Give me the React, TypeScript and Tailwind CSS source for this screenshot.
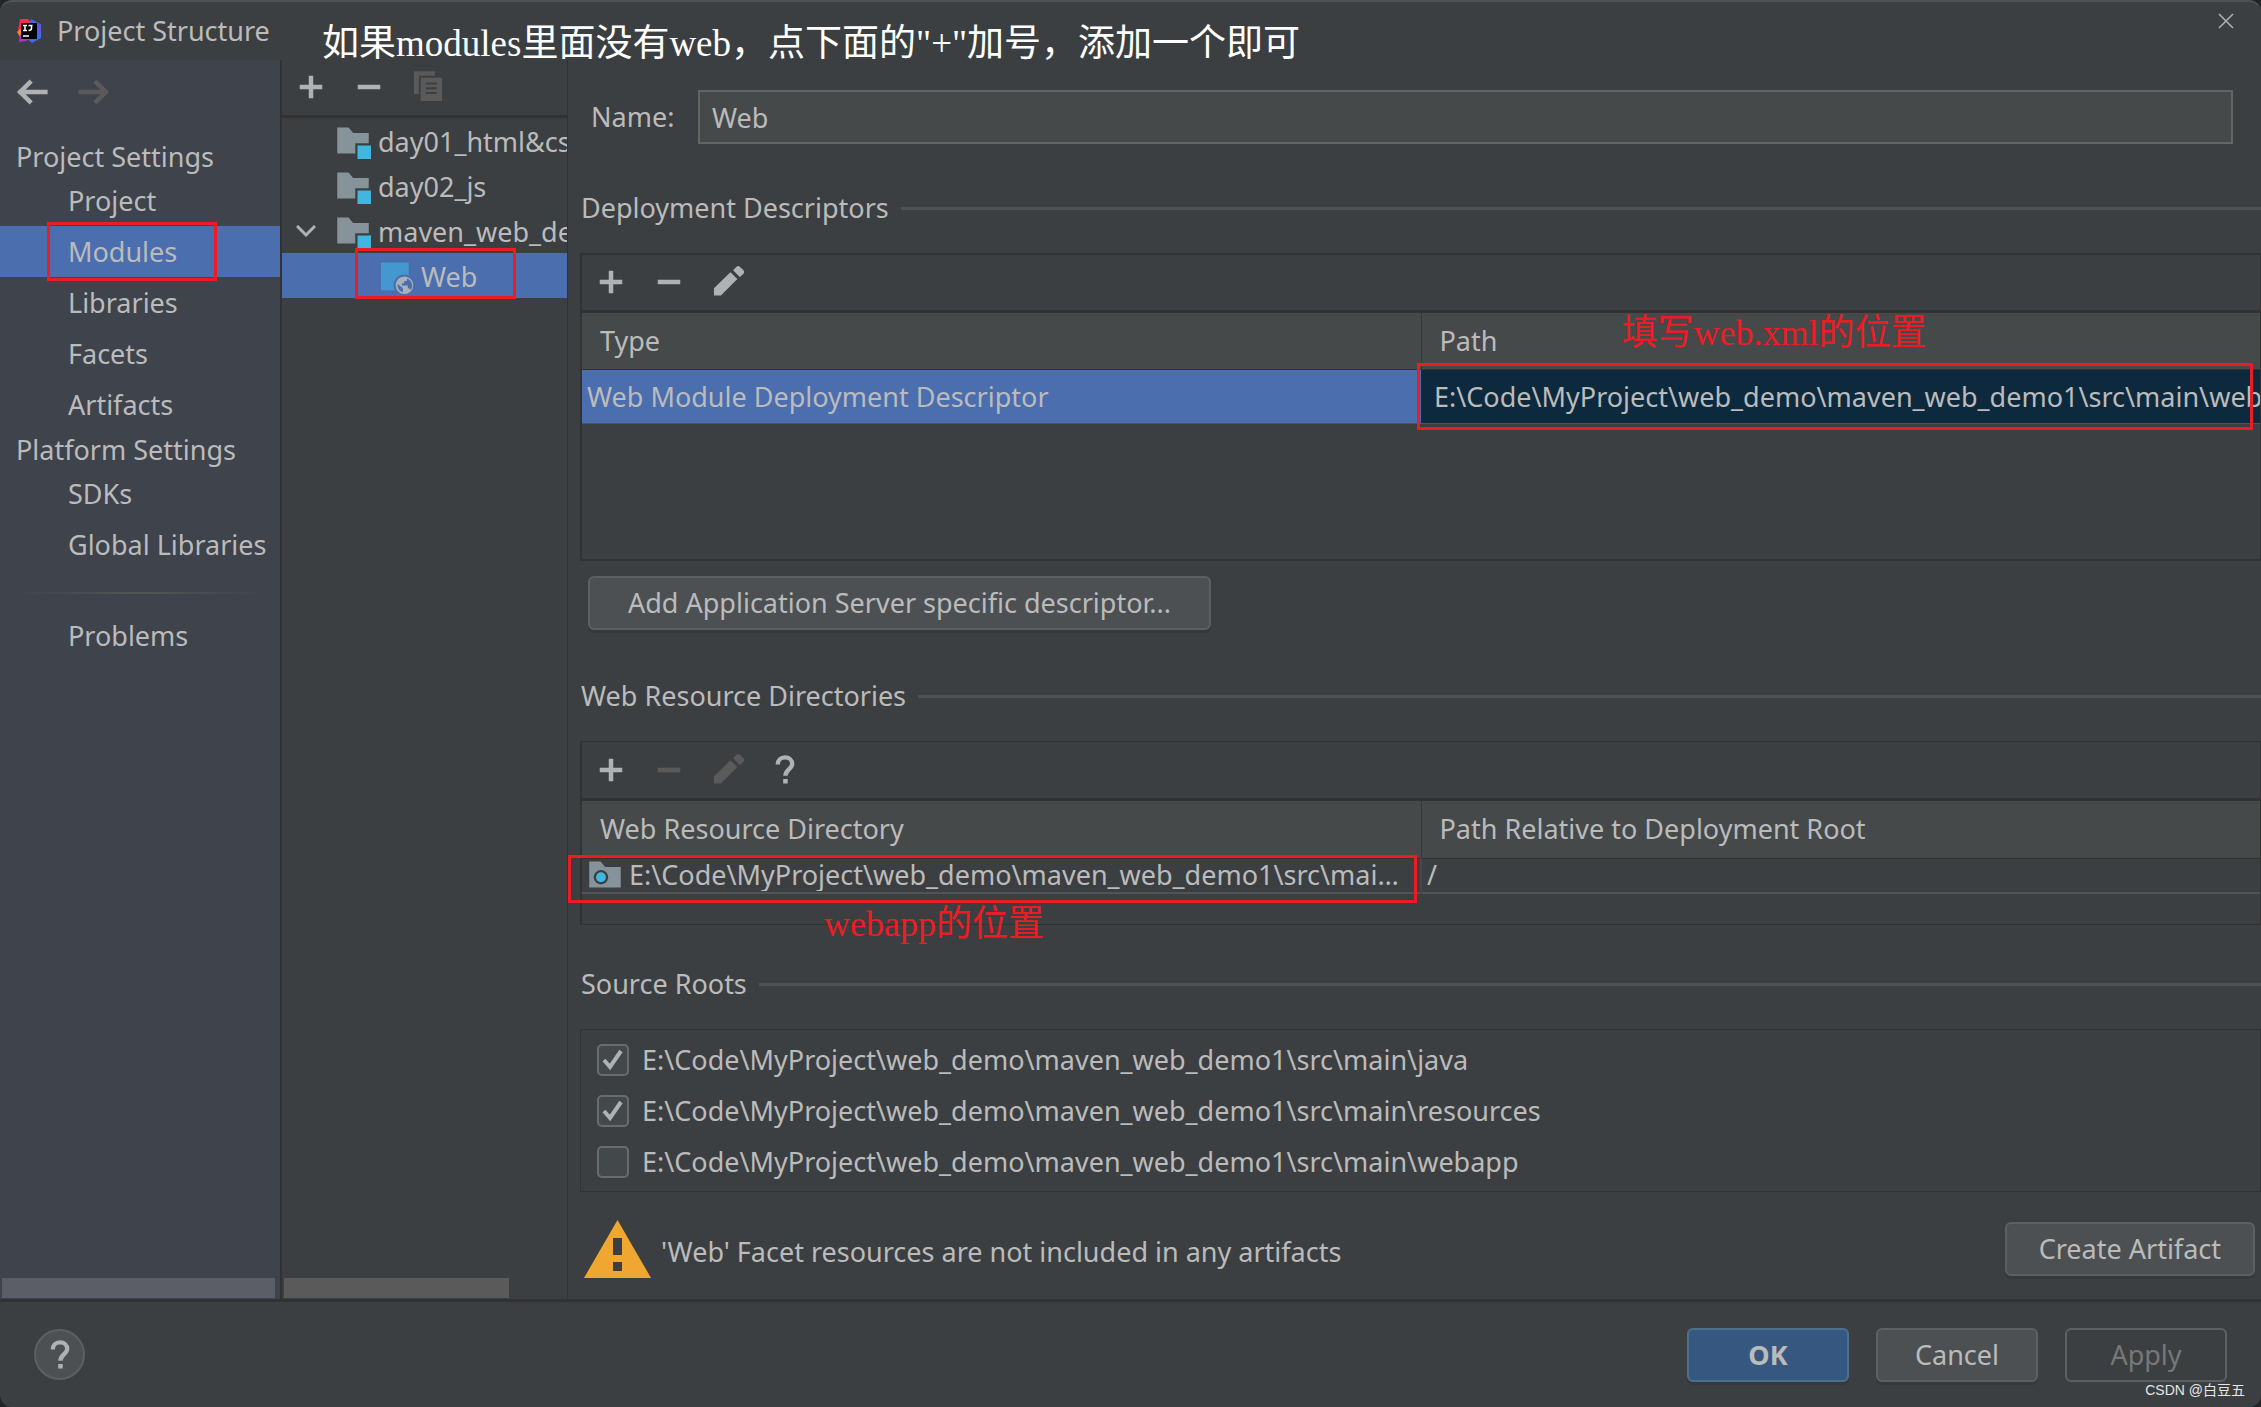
import { useState } from 'react';
import type { ReactNode } from 'react';

const ROOT = 'E:\\Code\\MyProject\\web_demo\\maven_web_demo1\\src\\main';

const PROJECT_ITEMS = ['Project', 'Modules', 'Libraries', 'Facets', 'Artifacts'];
const PLATFORM_ITEMS = ['SDKs', 'Global Libraries'];

const BUTTON =
  'flex items-center justify-center rounded-md border-2 border-[#5e6060] bg-[#4c5052] h-[54px] shadow-[0_3px_0_#36393a]';

/* ---------- icons (16 unit grid) ---------- */

function Icon({ children, className = '' }: { children: ReactNode; className?: string }) {
  return (
    <svg viewBox="0 0 16 16" className={`size-9 shrink-0 ${className}`} fill="currentColor" aria-hidden="true">
      {children}
    </svg>
  );
}

const PlusIcon = () => (
  <Icon>
    <path d="M7 3h2v4h4v2H9v4H7V9H3V7h4z" />
  </Icon>
);

const MinusIcon = () => (
  <Icon>
    <path d="M3 7h10v2H3z" />
  </Icon>
);

const PencilIcon = () => (
  <Icon>
    <path d="M2.2 14v-3.200L9.500 3.700l3.100 3L5.300 14z" />
    <path d="M10.700 2.800l1.400-1.500a1.200 1.200 0 0 1 1.700 0l1.400 1.400a1.200 1.200 0 0 1 0 1.700l-1.500 1.400z" />
  </Icon>
);

const CopyIcon = () => (
  <Icon>
    <path d="M2.200 1h9.300v2H4.400v8.100H2.200z" />
    <path
      fillRule="evenodd"
      d="M5.200 3.900h9.500v10.300H5.200zM7.400 6v.9h5V6zM7.400 8.100V9h5v-.9zM7.400 10.200v.9h5v-.9z"
    />
  </Icon>
);

const HelpIcon = () => (
  <Icon>
    <path
      d="M4.800 5.600C4.800 3.600 6.100 2.400 8 2.400s3.200 1.200 3.200 2.900c0 2.100-3 2.600-3 5.200"
      fill="none"
      stroke="currentColor"
      strokeWidth="1.9"
    />
    <path d="M7.200 12h2v2h-2z" />
  </Icon>
);

const ArrowIcon = ({ flip = false }: { flip?: boolean }) => (
  <Icon className={flip ? 'rotate-180' : ''}>
    <path d="M1.500 8h13M7.200 3.200L2.300 8l4.900 4.800" fill="none" stroke="currentColor" strokeWidth="2" />
  </Icon>
);

const ModuleIcon = () => (
  <Icon className="text-[#87939a]">
    <path d="M1 2h5l2.100 2.400H15V9H9v4.500H1z" />
    <path d="M10 10h6v6h-6z" fill="#40b6e0" />
  </Icon>
);

const WebIcon = () => (
  <Icon>
    <path d="M.9 2h12.300v12.400H.9z" fill="#4497cf" />
    <circle cx="11.300" cy="12.100" r="4.800" fill="#4b6eaf" />
    <circle cx="11.300" cy="12.100" r="3.900" fill="#a9b2b8" />
    <path
      d="M8.300 11.500l2.300 1.900v1.900c-1.600-.5-2.600-2-2.300-3.800zM12.400 9.100c1.500.5 2.300 1.700 2.300 3.100 0 .8-.3 1.500-.7 2-.2-.5-.6-.8-1.200-.8v-1.200h-2.600v-1h1v-1h1.200z"
      fill="#4b6eaf"
    />
  </Icon>
);

const WebFolderIcon = () => (
  <Icon className="text-[#87939a]">
    <path d="M1 2h5l2.100 2.400H15v9.100H1z" />
    <circle cx="6.200" cy="9" r="3.200" fill="#3c3f41" />
    <circle cx="6.200" cy="9" r="2.200" fill="#40b6e0" />
  </Icon>
);

function LogoIcon() {
  return (
    <svg viewBox="0 0 24 24" className="size-6 shrink-0" aria-hidden="true">
      <path d="M3 0h8l5 5-2 9L1 11z" fill="#fe2857" />
      <path d="M0 13l3-3 3 4-3 4z" fill="#fc801d" />
      <path d="M14 0l10 5.500V19l-9 5-6-5z" fill="#3a6cf0" />
      <path d="M24 5.500V13l-4 2V3.500z" fill="#5b57e0" />
      <path d="M3 16l9 4-3 2-7 1z" fill="#b62fd0" />
      <path d="M4 4h16v16H4z" fill="#000" />
      <path d="M6 6.500h4M8 6.500v5M6 11.500h4M11.500 6.500h4M14.500 6.500v3q0 2-3 2M6 17h6" stroke="#fff" strokeWidth="1.5" fill="none" />
    </svg>
  );
}

/* ---------- building blocks ---------- */

/** Red frame drawn over the control that the note is about. */
const Mark = ({ className }: { className: string }) => (
  <span className={`pointer-events-none absolute z-10 border-[3px] border-[#ed1c24] ${className}`} />
);

const Note = ({ children, className }: { children: ReactNode; className: string }) => (
  <p
    className={`pointer-events-none absolute z-20 whitespace-nowrap font-['Liberation_Serif','Noto_Sans_CJK_SC',serif] leading-10 ${className}`}
  >
    {children}
  </p>
);

function ToolButton({ label, disabled, children }: { label: string; disabled?: boolean; children: ReactNode }) {
  return (
    <button
      type="button"
      aria-label={label}
      disabled={disabled}
      className="flex h-[54px] w-[58px] items-center justify-center text-[#afb1b3] disabled:text-[#5a5a5a]"
    >
      {children}
    </button>
  );
}

function SectionTitle({ children }: { children: ReactNode }) {
  return (
    <div className="mb-[25px] flex h-10 items-center gap-3 pl-[13px]">
      <h2>{children}</h2>
      <span className="h-[3px] flex-1 bg-[#515151]" />
    </div>
  );
}

function NavItem({ label, active, onClick }: { label: string; active: boolean; onClick: () => void }) {
  return (
    <li className={`relative ${active ? 'bg-[#4b6eaf]' : ''}`}>
      <button
        type="button"
        onClick={onClick}
        className="flex h-[51px] w-full items-center whitespace-nowrap pl-[68px]"
      >
        {label}
      </button>
      {label === 'Modules' && <Mark className="-top-1 left-[47px] h-[59px] w-[170px]" />}
    </li>
  );
}

function Sidebar() {
  const [active, setActive] = useState('Modules');
  const renderItem = (label: string) => (
    <NavItem key={label} label={label} active={active === label} onClick={() => setActive(label)} />
  );
  return (
    <nav className="flex w-[282px] shrink-0 flex-col border-r-2 border-[#323232] bg-[#3e434c]">
      <div className="flex h-[77px] items-center gap-6 px-[15px] pb-[13px]">
        <button type="button" aria-label="Back" className="text-[#afb1b3]">
          <ArrowIcon />
        </button>
        <button type="button" aria-label="Forward" disabled className="text-[#5a5a5a]">
          <ArrowIcon flip />
        </button>
      </div>
      <h2 className="flex h-[38px] items-center pt-[2px] pl-4">Project Settings</h2>
      <ul>{PROJECT_ITEMS.map(renderItem)}</ul>
      <h2 className="flex h-[38px] items-center pt-[2px] pl-4">Platform Settings</h2>
      <ul>{PLATFORM_ITEMS.map(renderItem)}</ul>
      <hr className="mx-3 mt-[22px] mb-4 h-[2px] border-0 bg-linear-to-r from-transparent via-[#555555] to-transparent" />
      <ul>{renderItem('Problems')}</ul>
      <div className="mt-auto mr-[5px] mb-px ml-[2px] h-5 bg-[#5b5e66]" />
    </nav>
  );
}

function TreeRow({ label, open }: { label: string; open?: boolean }) {
  return (
    <li className="flex h-[45px] items-center whitespace-nowrap">
      <span className="flex w-[53px] shrink-0 justify-center pr-[6px]">
        {open && (
          <svg viewBox="0 0 20 12" className="h-3 w-5" fill="none" stroke="#afb1b3" strokeWidth="3" aria-hidden="true">
            <path d="M1 1l9 9 9-9" />
          </svg>
        )}
      </span>
      <ModuleIcon />
      <span className="pt-[2px] pl-[7px]">{label}</span>
    </li>
  );
}

function ModuleTree() {
  return (
    <section className="flex w-[286px] shrink-0 flex-col border-r border-[#323232]">
      <div className="flex h-[58px] border-b-[3px] border-[#323232]">
        <ToolButton label="Add">
          <PlusIcon />
        </ToolButton>
        <ToolButton label="Remove">
          <MinusIcon />
        </ToolButton>
        <ToolButton label="Copy" disabled>
          <CopyIcon />
        </ToolButton>
      </div>
      <div className="relative">
        <ul className="overflow-hidden">
          <TreeRow label="day01_html&css" />
          <TreeRow label="day02_js" />
          <TreeRow label="maven_web_demo1" open />
          <li className="flex h-[45px] items-center bg-[#4b6eaf] pl-[97px]">
            <WebIcon />
            <span className="pt-[2px] pl-[6px]">Web</span>
          </li>
        </ul>
        <Mark className="top-[130px] left-[73px] h-[51px] w-[161px]" />
      </div>
      <div className="mt-auto mb-px ml-[2px] h-5 w-[225px] bg-[#5a5a5b]" />
    </section>
  );
}

function Descriptors() {
  return (
    <div className="ml-3 h-[308px] border-2 border-r border-[#323232]">
      <div className="flex h-[58px] border-b-[3px] border-[#323232]">
        <ToolButton label="Add descriptor">
          <PlusIcon />
        </ToolButton>
        <ToolButton label="Remove descriptor">
          <MinusIcon />
        </ToolButton>
        <ToolButton label="Edit descriptor">
          <PencilIcon />
        </ToolButton>
      </div>
      <table className="w-full table-fixed border-collapse text-left">
        <thead>
          <tr className="h-14 border-b border-[#323232] bg-[#45494a]">
            <th className="w-1/2 border-r border-[#35383a] pl-[18px] font-normal">Type</th>
            <th className="relative pl-[18px] font-normal">
              Path
              <Note className="top-0 left-[200px] text-[36px] text-[#ed1c24]">填写web.xml的位置</Note>
            </th>
          </tr>
        </thead>
        <tbody>
          <tr className="h-[54px] border-b border-[#515355]">
            <td className="bg-[#4b6eaf] pt-[2px] pl-[5px]">Web Module Deployment Descriptor</td>
            <td className="relative bg-[#0d293e] pt-[2px]">
              <div className="overflow-hidden whitespace-nowrap pl-[13px]">{ROOT}\webapp\WEB-INF\web.xml</div>
              <Mark className="-top-[7px] right-[7px] -left-1 h-[67px]" />
            </td>
          </tr>
        </tbody>
      </table>
    </div>
  );
}

function ResourceDirectories() {
  return (
    <div className="relative ml-3 h-[184px] border border-l-2 border-[#323232]">
      <div className="flex h-[59px] items-center border-b-[3px] border-[#323232]">
        <ToolButton label="Add directory">
          <PlusIcon />
        </ToolButton>
        <ToolButton label="Remove directory" disabled>
          <MinusIcon />
        </ToolButton>
        <ToolButton label="Edit directory" disabled>
          <PencilIcon />
        </ToolButton>
        <ToolButton label="Help">
          <HelpIcon />
        </ToolButton>
      </div>
      <table className="w-full table-fixed border-collapse text-left">
        <thead>
          <tr className="h-[57px] border-b border-[#323232] bg-[#45494a]">
            <th className="w-1/2 border-r border-[#35383a] pl-[18px] font-normal">Web Resource Directory</th>
            <th className="pl-[18px] font-normal">Path Relative to Deployment Root</th>
          </tr>
        </thead>
        <tbody>
          <tr className="h-[34px] border-b-2 border-[#515355] leading-8">
            <td className="relative border-r-2 border-[#45494a]">
              <div className="flex h-[33px] items-center pr-2 pl-[5px]">
                <WebFolderIcon />
                <span className="truncate pl-[6px]">{ROOT}\webapp</span>
              </div>
              <Mark className="-top-1 right-[3px] -left-[14px] h-12" />
            </td>
            <td className="pl-[5px]">/</td>
          </tr>
        </tbody>
      </table>
      <Note className="-bottom-5 left-[242px] text-[36px] text-[#ed1c24]">webapp的位置</Note>
    </div>
  );
}

function SourceRoots() {
  const [checked, setChecked] = useState<Record<string, boolean>>({ java: true, resources: true, webapp: false });
  return (
    <div className="ml-3 border border-[#323232] py-1">
      {Object.keys(checked).map((dir) => (
        <label key={dir} className="flex h-[51px] items-center gap-[13px] pl-4">
          <span className="relative flex size-8">
            <input
              type="checkbox"
              checked={checked[dir]}
              onChange={() => setChecked({ ...checked, [dir]: !checked[dir] })}
              className="size-8 appearance-none rounded-[5px] border-2 border-[#6b6b6b] bg-[#43494a]"
            />
            {checked[dir] && (
              <svg
                viewBox="0 0 32 32"
                className="pointer-events-none absolute inset-0"
                fill="none"
                stroke="#afb1b3"
                strokeWidth="4"
                aria-hidden="true"
              >
                <path d="M7 16l6 7L24 7" />
              </svg>
            )}
          </span>
          {ROOT}\{dir}
        </label>
      ))}
    </div>
  );
}

function FacetEditor() {
  return (
    <main className="flex min-w-0 flex-1 flex-col">
      <div className="flex items-center pt-[30px] pr-7 pl-[23px]">
        <label htmlFor="facet-name" className="w-[107px]">
          Name:
        </label>
        <input
          id="facet-name"
          defaultValue="Web"
          className="h-[54px] min-w-0 flex-1 border-2 border-[#646464] bg-[#45494a] px-3 outline-none"
        />
      </div>

      <div className="mt-11">
        <SectionTitle>Deployment Descriptors</SectionTitle>
      </div>
      <Descriptors />
      <div className="flex pt-[15px] pl-5">
        <button type="button" className={`${BUTTON} px-[38px]`}>
          Add Application Server specific descriptor...
        </button>
      </div>

      <div className="mt-[46px]">
        <SectionTitle>Web Resource Directories</SectionTitle>
      </div>
      <ResourceDirectories />

      <div className="mt-[39px]">
        <SectionTitle>Source Roots</SectionTitle>
      </div>
      <SourceRoots />

      <div className="mt-auto flex items-center pr-[6px] pb-[21px] pl-4">
        <svg viewBox="0 0 67 58" className="h-[58px] w-[67px] shrink-0" aria-hidden="true">
          <path d="M33.500 0L67 58H0z" fill="#f0a732" />
          <path d="M29 18h9v17h-9zM29 42h9v9h-9z" fill="#3c3f41" />
        </svg>
        <p className="flex-1 pt-[6px] pl-[10px]">'Web' Facet resources are not included in any artifacts</p>
        <button type="button" className={`${BUTTON} px-8`}>
          Create Artifact
        </button>
      </div>
    </main>
  );
}

export default function App() {
  return (
    <div className="min-h-screen bg-[#232425] text-[#bbbbbb]">
      <div className="relative flex min-h-screen flex-col overflow-hidden rounded-xl border-t-2 border-[#505254] bg-[#3c3f41] font-['Noto_Sans','Noto_Sans_CJK_SC',sans-serif] text-[27px] leading-9">
        <header className="flex h-[58px] items-center pr-[27px] pl-[17px]">
          <LogoIcon />
          <h1 className="pl-4">Project Structure</h1>
          <button type="button" aria-label="Close" className="mb-5 ml-auto">
            <svg viewBox="0 0 16 16" className="size-4" stroke="#afb1b3" strokeWidth="1.500" aria-hidden="true">
              <path d="M1 1l14 14M15 1L1 15" />
            </svg>
          </button>
        </header>
        <Note className="top-[22px] left-[322px] text-[37px] text-white">
          如果modules里面没有web，点下面的"+"加号，添加一个即可
        </Note>

        <div className="flex min-h-0 flex-1">
          <Sidebar />
          <ModuleTree />
          <FacetEditor />
        </div>

        <footer className="relative flex h-[108px] items-center gap-[27px] border-t-[3px] border-[#323232] px-[34px]">
          <button
            type="button"
            aria-label="Help"
            className="mr-auto flex size-[51px] items-center justify-center rounded-full border-2 border-[#5e6060] bg-[#4c5052] text-[#afb1b3]"
          >
            <HelpIcon />
          </button>
          <button
            type="button"
            className="flex h-[54px] w-[162px] items-center justify-center rounded-md border-2 border-[#4c708c] bg-[#365880] font-bold shadow-[0_3px_0_#36393a]"
          >
            OK
          </button>
          <button type="button" className={`${BUTTON} w-[162px]`}>
            Cancel
          </button>
          <button
            type="button"
            disabled
            className="flex h-[54px] w-[162px] items-center justify-center rounded-md border-2 border-[#5e6060] text-[#777777]"
          >
            Apply
          </button>
          <span className="absolute right-4 bottom-[7px] font-['Liberation_Sans','Noto_Sans_CJK_SC',sans-serif] text-sm text-[#e6e6e6]">
            CSDN @白豆五
          </span>
        </footer>
      </div>
    </div>
  );
}
